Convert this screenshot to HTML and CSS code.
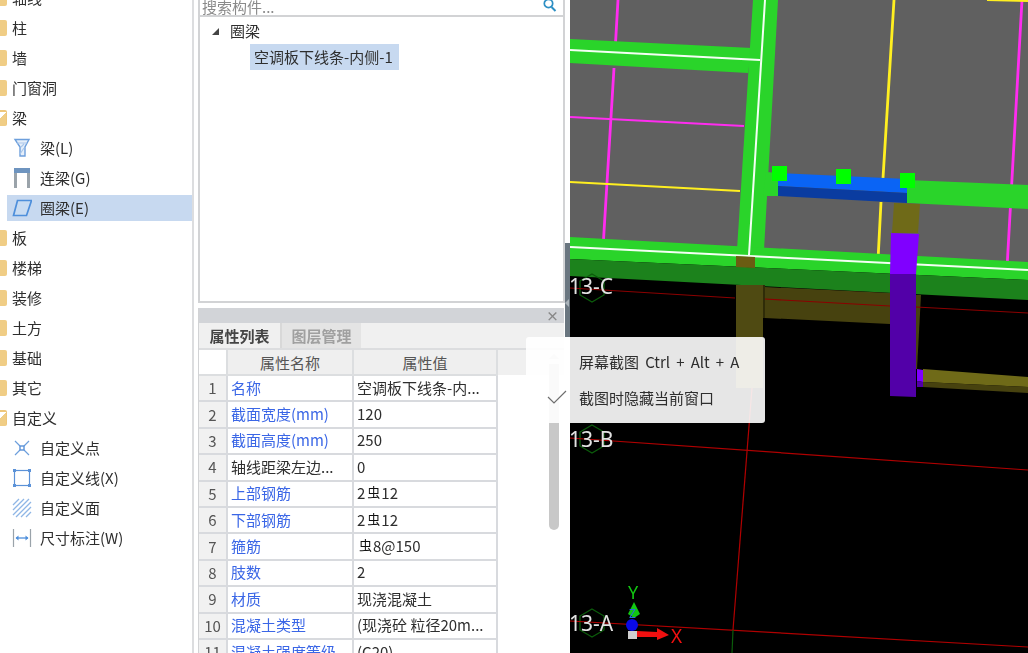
FILE: index.html
```html
<!DOCTYPE html>
<html lang="zh">
<head>
<meta charset="utf-8">
<title>属性列表</title>
<link rel="stylesheet" href="styles.css">
</head>
<body>
<div class="app">
  <nav class="sidebar">
    <ul class="nav-list">
      <li class="nav-item"><span class="folder"></span>轴线</li>
      <li class="nav-item"><span class="folder"></span>柱</li>
      <li class="nav-item"><span class="folder"></span>墙</li>
      <li class="nav-item"><span class="folder"></span>门窗洞</li>
      <li class="nav-item"><span class="folder open"></span>梁</li>
      <li class="nav-child"><span class="child-inner">
        <svg class="ico" viewBox="0 0 20 20"><path d="M3 1.500h14l-4 7.500v9H8V9z" fill="#e6effa" stroke="#6d9fdc" stroke-width="1.400"/><path d="M5 5h10M9 9l3-3M8 16l4-6" stroke="#a9c6ea" stroke-width="1.200" fill="none"/></svg>梁(L)</span></li>
      <li class="nav-child"><span class="child-inner">
        <svg class="ico" viewBox="0 0 20 20"><path d="M2 0h16v5H2z" fill="#6e94bf"/><path d="M2 5h3v15H2zM15 5h3v15h-3z" fill="#9aa3aa"/></svg>连梁(G)</span></li>
      <li class="nav-child selected"><span class="child-inner">
        <svg class="ico" viewBox="0 0 20 20"><path d="M5.500 2.500h14l-5 15h-13z" fill="#c9dcf2" stroke="#4e8fdb" stroke-width="1.700"/></svg>圈梁(E)</span></li>
      <li class="nav-item"><span class="folder"></span>板</li>
      <li class="nav-item"><span class="folder"></span>楼梯</li>
      <li class="nav-item"><span class="folder"></span>装修</li>
      <li class="nav-item"><span class="folder"></span>土方</li>
      <li class="nav-item"><span class="folder"></span>基础</li>
      <li class="nav-item"><span class="folder"></span>其它</li>
      <li class="nav-item"><span class="folder open"></span>自定义</li>
      <li class="nav-child"><span class="child-inner">
        <svg class="ico" viewBox="0 0 20 20"><path d="M3 3l5 5M17 3l-5 5M3 17l5-5M17 17l-5-5" stroke="#6d9fdc" stroke-width="1.200" fill="none"/><rect x="8" y="8" width="4" height="4" fill="#fff" stroke="#5b92d8" stroke-width="1.400"/></svg>自定义点</span></li>
      <li class="nav-child"><span class="child-inner">
        <svg class="ico" viewBox="0 0 20 20"><rect x="2.500" y="2.500" width="15" height="15" fill="none" stroke="#5b92d8" stroke-width="1.200"/><path d="M1 1h3v3H1zM16 1h3v3h-3zM1 16h3v3H1zM16 16h3v3h-3z" fill="#5b92d8"/></svg>自定义线(X)</span></li>
      <li class="nav-child"><span class="child-inner">
        <svg class="ico" viewBox="0 0 20 20"><path d="M1 7l6-6M1 12L12 1M1 17L17 1M4 19L19 4M9 19L19 9M14 19l5-5" stroke="#8fb6e6" stroke-width="1.300" fill="none"/></svg>自定义面</span></li>
      <li class="nav-child"><span class="child-inner">
        <svg class="ico" viewBox="0 0 20 20"><path d="M1.500 1v18M18.500 1v18" stroke="#9aa3aa" stroke-width="1.200" fill="none"/><path d="M4 10h12" stroke="#4e8fdb" stroke-width="1.300"/><path d="M3.500 10l3-2.500v5zM16.500 10l-3-2.500v5z" fill="#4e8fdb"/></svg>尺寸标注(W)</span></li>
    </ul>
  </nav>

  <section class="mid">
    <div class="tree-panel">
      <div class="search">
        <span class="search-text">搜索构件...</span>
        <svg class="search-icon" viewBox="0 0 14 14"><circle cx="5.500" cy="4.500" r="4.200" fill="none" stroke="#2d8fc4" stroke-width="1.700"/><path d="M8.500 8l4 4" stroke="#2d8fc4" stroke-width="2"/></svg>
      </div>
      <div class="tree">
        <div class="tree-root"><span class="tree-arrow"></span>圈梁</div>
        <div class="tree-leaf"><span class="tree-leaf-label">空调板下线条-内侧-1</span></div>
      </div>
    </div>

    <div class="props-panel">
      <div class="props-title"><span class="close">×</span></div>
      <div class="tabs">
        <span class="tab active">属性列表</span>
        <span class="tab">图层管理</span>
      </div>
      <div class="table-wrap">
        <table class="props">
          <colgroup><col class="c-num"><col class="c-name"><col class="c-val"><col></colgroup>
          <thead>
            <tr><th class="corner"></th><th>属性名称</th><th>属性值</th><th class="fill"></th></tr>
          </thead>
          <tbody>
            <tr><td class="num">1</td><td class="link">名称</td><td>空调板下线条-内...</td><td class="empty"></td></tr>
            <tr><td class="num">2</td><td class="link">截面宽度(mm)</td><td>120</td><td class="empty"></td></tr>
            <tr><td class="num">3</td><td class="link">截面高度(mm)</td><td>250</td><td class="empty"></td></tr>
            <tr><td class="num">4</td><td>轴线距梁左边...</td><td>0</td><td class="empty"></td></tr>
            <tr><td class="num">5</td><td class="link">上部钢筋</td><td>2<span class="steel">虫</span>12</td><td class="empty"></td></tr>
            <tr><td class="num">6</td><td class="link">下部钢筋</td><td>2<span class="steel">虫</span>12</td><td class="empty"></td></tr>
            <tr><td class="num">7</td><td class="link">箍筋</td><td><span class="steel">虫</span>8@150</td><td class="empty"></td></tr>
            <tr><td class="num">8</td><td class="link">肢数</td><td>2</td><td class="empty"></td></tr>
            <tr><td class="num">9</td><td class="link">材质</td><td>现浇混凝土</td><td class="empty"></td></tr>
            <tr><td class="num">10</td><td class="link">混凝土类型</td><td>(现浇砼 粒径20m...</td><td class="empty"></td></tr>
            <tr><td class="num">11</td><td class="link">混凝土强度等级</td><td>(C20)</td><td class="empty"></td></tr>
          </tbody>
        </table>
        <span class="scroll-arrow"></span>
        <span class="scroll-thumb"></span>
      </div>
    </div>
  </section>

  <div class="splitter">
    <div class="split-top"></div>
    <div class="split-handle"><span class="split-arrow"></span></div>
  </div>

  <svg class="scene" viewBox="570 0 458 653" width="458" height="653">
    <defs>
      <polygon id="hex" points="0,-14 12,-7 12,7 0,14 -12,7 -12,-7" fill="none" stroke="#0b5c0b" stroke-width="1.300"/>
    </defs>
    <rect x="570" y="0" width="458" height="653" fill="#000"/>
    <polygon points="570,0 1028,0 1028,275 570,250" fill="#606060"/>

    <!-- magenta and yellow lines on the slab -->
    <g fill="none" stroke-width="2.800">
      <path d="M618 0L615 52M614 68L603 248M1022 0L1007 268M602 248h11M1006 268l11 1M615 52l11 1" stroke="#ff2cf0"/>
      <path d="M570 117L744 126" stroke="#ff2cf0" stroke-width="2.200"/>
      <path d="M894 0L883 178M881 202L878 260" stroke="#ffef20"/>
      <path d="M570 182L740 191M987 0L1028 1" stroke="#ffef20" stroke-width="2.200"/>
    </g>

    <!-- green beams -->
    <polygon points="570,39 752,48 748,73 570,63" fill="#2ad42a"/>
    <polygon points="753,0 778,0 764,250 737,250" fill="#2ad42a"/>
    <polygon points="570,237 1028,262 1028,280 570,259" fill="#2ad42a"/>
    <polygon points="570,259 1028,280 1028,300 570,276" fill="#1c821c"/>
    <polygon points="907,180 1028,185 1028,209 907,203" fill="#2ad42a"/>
    <polygon points="766,172 780,173 780,196 763,196" fill="#2ad42a"/>
    <path d="M570 50L760 60M765 0L749 255M570 247L1028 270" fill="none" stroke="#f4fff4" stroke-width="2"/>
    <polygon points="736,256 755,257 755,268 736,267" fill="#6b5c12"/>

    <!-- selected ring beam -->
    <polygon points="778,173 907,179 907,193 778,186" fill="#0a64f5"/>
    <polygon points="778,186 907,193 907,203 778,196" fill="#0a3ca0"/>
    <rect x="772" y="166" width="15" height="15" fill="#00ff00"/>
    <rect x="836" y="169" width="15" height="15" fill="#00ff00"/>
    <rect x="900" y="173" width="15" height="15" fill="#00ff00"/>

    <!-- columns and lower beams -->
    <polygon points="765,287 890,293 890,324 765,318" fill="#47420f"/>
    <rect x="736" y="285" width="27" height="103" fill="#4f4a12"/>
    <rect x="763" y="285" width="2" height="33" fill="#2f2c08"/>
    <polygon points="916,295 921,295 917,369 916,369" fill="#47420f"/>
    <polygon points="894,203 920,204 918,233 892,233" fill="#6f6a18"/>
    <polygon points="891,233 919,234 916,274 890,274" fill="#8000ff"/>
    <polygon points="890,274 916,274 916,397 890,396" fill="#5200a8"/>
    <polygon points="923,369 1028,377 1028,387 923,382" fill="#6f6a18"/>
    <polygon points="923,382 1028,387 1028,393 923,387" fill="#47420f"/>
    <polygon points="917,369 923,370 923,382 917,381" fill="#8000ff"/>
    <polygon points="917,381 923,382 923,387 917,387" fill="#5200a8"/>

    <!-- axis grid -->
    <use href="#hex" x="592" y="288"/>
    <use href="#hex" x="592" y="439"/>
    <use href="#hex" x="592" y="623"/>
    <path d="M570 288L735 298M765 299L890 306M916 307L1028 313" fill="none" stroke="#8b0000" stroke-width="1.200"/>
    <path d="M570 438L1028 470M570 621L1028 647" fill="none" stroke="#b00000" stroke-width="1.200"/>
    <path d="M752 388L733 630" fill="none" stroke="#b00000" stroke-width="1.200"/>
    <path d="M733 630L732 653" fill="none" stroke="#0b5c0b" stroke-width="1.200"/>
    <text class="axis-label" x="569" y="294">13-C</text>
    <text class="axis-label" x="569" y="447">13-B</text>
    <text class="axis-label" x="569" y="631">13-A</text>

    <!-- coordinate gizmo -->
    <text class="gizmo gizmo-y" x="628" y="599">Y</text>
    <polygon points="634,602 640,614 634,618 628,614" fill="#12c612"/>
    <rect x="628" y="631" width="9" height="8" fill="#cfcfcf"/>
    <polygon points="637,631 657,632 657,628 669,635 657,640 657,637 637,637" fill="#f01010"/>
    <circle cx="632" cy="625" r="6" fill="#0a0ae6"/>
    <text class="gizmo gizmo-z" x="629" y="618">Z</text>
    <text class="gizmo gizmo-x" x="671" y="643">X</text>
  </svg>

  <div class="popup">
    <div class="popup-row wide">屏幕截图 Ctrl + Alt + A</div>
    <div class="popup-row">
      <svg class="check" viewBox="0 0 20 14"><path d="M1 7l6 6L19 1" fill="none" stroke="#6e6e6e" stroke-width="1.200"/></svg>截图时隐藏当前窗口
    </div>
  </div>
</div>
</body>
</html>
```

FILE: styles.css
```css
* { box-sizing: border-box; }
html, body { margin: 0; height: 100%; background: #fff; overflow: hidden; }
body {
  font-family: "Noto Sans CJK SC", "Noto Sans", sans-serif;
  font-size: 15px;
  color: #2e2e2e;
}
ul { margin: 0; padding: 0; list-style: none; }

.app { position: relative; display: flex; width: 1028px; height: 653px; overflow: hidden; }
.sidebar, .mid, .scene { filter: blur(0.35px); }

/* left tree */
.sidebar { flex: none; width: 194px; border-right: 2px solid #dcdddf; overflow: hidden; }
.nav-list { margin-top: -17px; }
.nav-item { display: flex; align-items: center; height: 30px; line-height: 30px; gap: 5px; }
.folder {
  flex: none;
  width: 7px;
  height: 16px;
  background: #f0cd85;
  border-radius: 0 2px 2px 0;
}
.folder.open { background: linear-gradient(135deg, #fff 0 30%, #f0cd85 31%); border-top: 2px solid #eec67a; border-right: 1px solid #eec67a; }
.nav-child { display: flex; align-items: center; height: 30px; padding-left: 7px; }
.child-inner { display: flex; flex: 1; align-items: center; height: 26px; padding-left: 5px; gap: 8px; line-height: 26px; }
.selected .child-inner { background: #c7d9f0; }
.ico { flex: none; width: 20px; height: 20px; }

/* middle column */
.mid { flex: none; display: flex; flex-direction: column; width: 367px; margin-left: 4px; height: 653px; }
.tree-panel {
  flex: none;
  height: 303px;
  border: solid #d2d3d5;
  border-width: 0 2px 2px 2px;
}
.search { display: flex; align-items: center; justify-content: space-between; height: 17px; padding: 0 6px 0 2px; border-bottom: 2px solid #d2d3d5; overflow: hidden; }
.search-text { color: #8a8a8a; line-height: 14px; margin-top: -2px; }
.search-icon { width: 14px; height: 14px; margin-top: -4px; }
.tree { padding-top: 1px; }
.tree-root { display: flex; align-items: center; height: 26px; padding-left: 12px; line-height: 26px; }
.tree-arrow { width: 0; height: 0; margin-right: 11px; border-style: solid; border-width: 0 0 7px 7px; border-color: transparent transparent #444 transparent; }
.tree-leaf { padding-left: 50px; height: 26px; }
.tree-leaf-label { display: inline-block; height: 26px; padding: 0 6px 0 4px; line-height: 26px; background: #c7d9f0; }

/* properties panel */
.props-panel { flex: 1; margin-top: 5px; border-left: 1px solid #d2d3d5; overflow: hidden; }
.props-title { position: relative; height: 15px; background: #d2d4d8; margin-right: 1px; }
.close { position: absolute; right: 5px; top: 0; color: #888; font-size: 13px; line-height: 16px; font-weight: 700; }
.tabs { display: flex; height: 27px; background: #f0f0f0; border-bottom: 2px solid #dcdddf; margin-right: 1px; }
.tab { width: 81px; line-height: 25px; text-align: center; color: #a0a0a0; background: #e4e4e4; border-left: 2px solid #d8d8d8; font-weight: 700; }
.tab.active { color: #444; background: #f0f0f0; border-left: 0; }

.table-wrap { position: relative; height: 320px; }
.props { width: 365px; table-layout: fixed; border-collapse: collapse; }
.c-num { width: 28px; }
.c-name { width: 126px; }
.c-val { width: 144px; }
.props th { height: 25px; padding: 0; font-weight: 400; color: #555; background: #efefef; border-right: 2px solid #dcdee0; border-bottom: 2px solid #dcdee0; }
.props th.corner { background: #fff; }
.props th.fill { background: #f0f0f0; border: 0; }
.props td { height: 26.4px; padding: 0 4px 1px 3px; line-height: 20px; white-space: nowrap; overflow: hidden; color: #2e2e2e; border-right: 2px solid #d8dade; border-bottom: 2px solid #d8dade; }
.props td.num { padding: 0; text-align: center; color: #555; background: #f1f1f1; }
.props td.link { color: #3a66e6; }
.props td.empty { border: 0; }
.steel { display: inline-block; height: 14px; margin: 0 1px 0 2px; font-size: 13px; line-height: 14px; vertical-align: 2px; color: #111; }

.scroll-arrow { position: absolute; left: 350px; top: 4px; width: 0; height: 0; border-style: solid; border-width: 0 5px 5px 5px; border-color: transparent transparent #cfcfcf transparent; }
.scroll-thumb { position: absolute; left: 350px; top: 14px; width: 10px; height: 166px; background: #c8c8c8; border-radius: 0 0 5px 5px; }

/* splitter and 3D view */
.splitter { flex: none; display: flex; flex-direction: column; width: 5px; }
.split-top { height: 243px; background: #fff; }
.split-handle { position: relative; height: 94px; background: #6a7680; }
.split-arrow { position: absolute; left: 0; top: 56px; width: 0; height: 0; border-style: solid; border-width: 4px 4px 4px 0; border-color: transparent #a9b2b9 transparent transparent; }
.scene { flex: none; display: block; }
.axis-label { font-family: "Noto Sans", sans-serif; font-size: 21px; fill: #e2e2e2; }
.gizmo { font-family: "Noto Sans", sans-serif; font-size: 18px; }
.gizmo-y { fill: #12c612; }
.gizmo-x { fill: #f01010; font-size: 19px; }
.gizmo-z { fill: #2a6ae0; font-size: 12px; }

/* screenshot tool menu */
.popup {
  position: absolute;
  left: 526px;
  top: 337px;
  width: 239px;
  height: 86px;
  padding-top: 7px;
  background: rgba(255, 255, 255, 0.9);
  border-radius: 3px;
  color: #2e2e2e;
}
.popup-row { position: relative; height: 36px; padding-left: 53px; line-height: 36px; white-space: nowrap; }
.popup-row.wide { word-spacing: 2.800px; }
.check { position: absolute; left: 21px; top: 10px; width: 20px; height: 14px; }
```
